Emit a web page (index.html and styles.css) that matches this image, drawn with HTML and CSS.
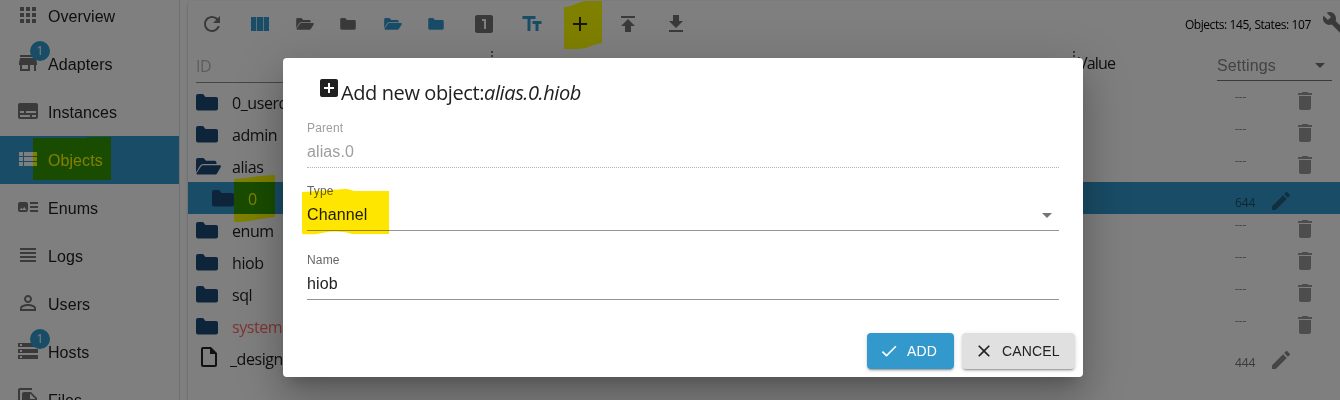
FILE: index.html
```html
<!DOCTYPE html>
<html lang="en">
<head>
<meta charset="utf-8">
<title>Objects</title>
<link rel="stylesheet" href="styles.css">
</head>
<body>
<svg class="defs" aria-hidden="true">
  <symbol id="folder" viewBox="0 0 22 17"><path d="M2 0H7L9.5 3H20a2 2 0 0 1 2 2V14.5a2 2 0 0 1-2 2H2a2 2 0 0 1-2-2V2A2 2 0 0 1 2 0Z"/></symbol>
  <symbol id="folder-open" viewBox="0 0 25 17"><path d="M2 0H7.5L10 2.7H18.5a2 2 0 0 1 2 2V6H7.3a4 4 0 0 0-3.4 2L0 14.500V2A2 2 0 0 1 2 0Z"/><path d="M7.300 7.200H24a1 1 0 0 1 .9 1.500L21 15.400a2 2 0 0 1-1.800 1.100H1.500a1 1 0 0 1-.8-1.500L5 8.400a2.700 2.700 0 0 1 2.300-1.200Z"/></symbol>
  <symbol id="trash" viewBox="0 0 24 24"><path d="M6 19c0 1.100.9 2 2 2h8c1.100 0 2-.9 2-2V7H6v12zM19 4h-3.500l-1-1h-5l-1 1H5v2h14V4z"/></symbol>
  <symbol id="pencil" viewBox="0 0 24 24"><path d="M3 17.250V21h3.750L17.810 9.940l-3.750-3.750L3 17.250zM20.710 7.040c.39-.39.39-1.020 0-1.410l-2.340-2.340c-.39-.39-1.020-.39-1.410 0l-1.830 1.830 3.750 3.750 1.830-1.830z"/></symbol>
</svg>
<div class="app">
  <nav class="sidebar">
    <a class="nav-item"><svg viewBox="0 0 24 24"><path d="M4 8h4V4H4v4zm6 12h4v-4h-4v4zm-6 0h4v-4H4v4zm0-6h4v-4H4v4zm6 0h4v-4h-4v4zm6-10v4h4V4h-4zm-6 4h4V4h-4v4zm6 6h4v-4h-4v4zm0 6h4v-4h-4v4z"/></svg><span>Overview</span></a>
    <a class="nav-item"><svg viewBox="0 0 24 24"><path d="M20 4H4v2h16V4zm1 10v-2l-1-5H4l-1 5v2h1v6h10v-6h4v6h2v-6h1zm-9 4H6v-4h6v4z"/></svg><span>Adapters</span><b class="badge">1</b></a>
    <a class="nav-item"><svg viewBox="0 0 24 24"><path d="M20 4H4c-1.100 0-2 .9-2 2v12c0 1.100.9 2 2 2h16c1.100 0 2-.9 2-2V6c0-1.100-.9-2-2-2zM4 12h4v2H4v-2zm10 6H4v-2h10v2zm6 0h-4v-2h4v2zm0-4H10v-2h10v2z"/></svg><span>Instances</span></a>
    <a class="nav-item active"><svg viewBox="0 0 24 24"><path d="M3 9h4V5H3v4zm0 5h4v-4H3v4zm5 0h13v-4H8v4zm0-9v4h13V5H8zM3 19h4v-4H3v4zm5 0h13v-4H8v4z"/></svg><span>Objects</span></a>
    <a class="nav-item"><svg viewBox="0 0 24 24"><path d="M22 13h-8v-2h8v2zm0-6h-8v2h8V7zm-8 10h8v-2h-8v2zm-2-8v6c0 1.100-.9 2-2 2H4c-1.100 0-2-.9-2-2V9c0-1.100.9-2 2-2h6c1.100 0 2 .9 2 2zm-1.500 6-2.250-3-1.750 2.260-1.250-1.510L3.500 15h7z"/></svg><span>Enums</span></a>
    <a class="nav-item"><svg viewBox="0 0 24 24"><path d="M4 15h16v-2H4v2zm0 4h16v-2H4v2zm0-8h16V9H4v2zm0-6v2h16V5H4z"/></svg><span>Logs</span></a>
    <a class="nav-item"><svg viewBox="0 0 24 24"><path d="M12 5.900a2.100 2.100 0 1 1 0 4.200 2.100 2.100 0 0 1 0-4.200m0 9c2.970 0 6.100 1.460 6.100 2.100v1.100H5.900V17c0-.64 3.130-2.100 6.100-2.100M12 4C9.790 4 8 5.790 8 8s1.790 4 4 4 4-1.790 4-4-1.790-4-4-4zm0 9c-2.670 0-8 1.340-8 4v3h16v-3c0-2.660-5.330-4-8-4z"/></svg><span>Users</span></a>
    <a class="nav-item"><svg viewBox="0 0 24 24"><path d="M2 20h20v-4H2v4zm2-3h2v2H4v-2zM2 4v4h20V4H2zm4 3H4V5h2v2zm-4 7h20v-4H2v4zm2-3h2v2H4v-2z"/></svg><span>Hosts</span><b class="badge">1</b></a>
    <a class="nav-item"><svg viewBox="0 0 24 24"><path d="M16 1H4C2.900 1 2 1.900 2 3v14h2V3h12V1zm-1 4 6 6v10c0 1.100-.9 2-2 2H7.990C6.890 23 6 22.100 6 21l.01-14c0-1.100.89-2 1.990-2h7zm-1 7h5.500L14 6.500V12z"/></svg><span>Files</span></a>
  </nav>

  <main class="panel">
    <div class="toolbar">
      <button><svg viewBox="0 0 24 24"><path d="M17.650 6.350C16.200 4.900 14.210 4 12 4c-4.420 0-7.990 3.580-7.990 8s3.570 8 7.990 8c3.730 0 6.840-2.550 7.730-6h-2.080c-.82 2.330-3.040 4-5.650 4-3.310 0-6-2.690-6-6s2.690-6 6-6c1.660 0 3.140.69 4.220 1.780L13 11h7V4l-2.350 2.350z"/></svg></button>
      <button class="on"><svg viewBox="0 0 24 24"><path d="M3 5h5.300v14H3zM9 5h6v14H9zM15.700 5H21v14h-5.300z"/></svg></button>
      <div class="folders">
        <button><svg class="fo"><use href="#folder-open"/></svg></button>
        <button><svg class="fc"><use href="#folder"/></svg></button>
        <button class="on"><svg class="fo"><use href="#folder-open"/></svg></button>
        <button class="on"><svg class="fc"><use href="#folder"/></svg></button>
      </div>
      <button><svg viewBox="0 0 24 24"><path d="M19 3H5c-1.100 0-2 .9-2 2v14c0 1.100.9 2 2 2h14c1.100 0 2-.9 2-2V5c0-1.100-.9-2-2-2zm-5 14h-2V9h-2V7h4v10z"/></svg></button>
      <button class="on"><svg viewBox="0 0 24 24"><path d="M2.500 4v3h5v12h3V7h5V4h-13zm19 5h-9v3h3v7h3v-7h3V9z"/></svg></button>
      <button class="dark"><svg viewBox="0 0 24 24"><path d="M19 13h-6v6h-2v-6H5v-2h6V5h2v6h6v2z"/></svg></button>
      <button><svg viewBox="0 0 24 24"><path d="M5 4v2h14V4H5zm0 10h4v6h6v-6h4l-7-7-7 7z"/></svg></button>
      <button><svg viewBox="0 0 24 24"><path d="M19 9h-4V3H9v6H5l7 7 7-7zM5 18v2h14v-2H5z"/></svg></button>
      <span class="stats">Objects: 145, States: 107</span>
      <svg class="wrench" viewBox="0 0 24 24"><path d="m22.700 19-9.100-9.100c.9-2.300.4-5-1.500-6.900-2-2-5-2.400-7.400-1.300L9 6 6 9 1.600 4.700C.4 7.100.9 10.100 2.900 12.100c1.900 1.900 4.600 2.400 6.900 1.500l9.100 9.100c.4.4 1 .4 1.400 0l2.300-2.300c.5-.4.5-1.100.1-1.400z"/></svg>
    </div>
    <div class="head">
      <div class="id-field">ID</div>
      <i class="grip"></i>
      <i class="grip"></i>
      <span class="value">Value</span>
      <div class="settings">Settings<i class="caret"></i></div>
    </div>
    <div class="rows">
      <div class="row"><svg class="ico"><use href="#folder"/></svg><span>0_userdata</span><em>---</em><svg class="act"><use href="#trash"/></svg></div>
      <div class="row"><svg class="ico"><use href="#folder"/></svg><span>admin</span><em>---</em><svg class="act"><use href="#trash"/></svg></div>
      <div class="row"><svg class="ico open"><use href="#folder-open"/></svg><span>alias</span><em>---</em><svg class="act"><use href="#trash"/></svg></div>
      <div class="row selected"><svg class="ico"><use href="#folder"/></svg><span>0</span><em class="num">644</em><svg class="act edit"><use href="#pencil"/></svg></div>
      <div class="row"><svg class="ico"><use href="#folder"/></svg><span>enum</span><em>---</em><svg class="act"><use href="#trash"/></svg></div>
      <div class="row"><svg class="ico"><use href="#folder"/></svg><span>hiob</span><em>---</em><svg class="act"><use href="#trash"/></svg></div>
      <div class="row"><svg class="ico"><use href="#folder"/></svg><span>sql</span><em>---</em><svg class="act"><use href="#trash"/></svg></div>
      <div class="row system"><svg class="ico"><use href="#folder"/></svg><span>system</span><em>---</em><svg class="act"><use href="#trash"/></svg></div>
      <div class="row doc"><svg class="file" viewBox="0 0 24 24"><path d="M14 2H6c-1.100 0-2 .9-2 2v16c0 1.100.9 2 2 2h12c1.100 0 2-.9 2-2V8l-6-6zM6 20V4h7v5h5v11H6z"/></svg><span>_design</span><em class="num">444</em><svg class="act edit"><use href="#pencil"/></svg></div>
    </div>
  </main>
  <svg class="marker" viewBox="0 0 1340 400"><path d="M33 138H87V137H111V180H33ZM564 7C573 7 579 1 587 1H602V43C590 45 588 49 576 49H564ZM234 179C247 178 254 176 275 175V217C262 218 252 222 234 222Z"/></svg>
</div>

<div class="backdrop">
  <section class="dialog">
    <h2><svg viewBox="0 0 24 24"><path d="M19 3H5c-1.100 0-2 .9-2 2v14c0 1.100.9 2 2 2h14c1.100 0 2-.9 2-2V5c0-1.100-.9-2-2-2zm-2 10h-4v4h-2v-4H7v-2h4V7h2v4h4v2z"/></svg><span>Add new object:</span><i>alias.0.hiob</i></h2>
    <div class="field disabled"><label>Parent</label><p>alias.0</p></div>
    <div class="field type"><label>Type</label><p>Channel<i class="caret"></i></p></div>
    <div class="field name"><label>Name</label><p>hiob</p></div>
    <footer>
      <button class="btn primary"><svg viewBox="0 0 24 24"><path d="M9 16.170 4.830 12l-1.420 1.410L9 19 21 7l-1.410-1.410z"/></svg><span>ADD</span></button>
      <button class="btn"><svg viewBox="0 0 24 24"><path d="M19 6.410 17.590 5 12 10.590 6.410 5 5 6.410 10.590 12 5 17.590 6.410 19 12 13.410 17.590 19 19 17.590 13.410 12z"/></svg><span>CANCEL</span></button>
    </footer>
    <svg class="dialog-marker" viewBox="0 0 87 46"><path d="M0 3C16 2 25 1 42 0C50 0 48 2 55 2H87V45H50C40 42 30 42 20 44C12 46 6 45 0 45Z"/></svg>
  </section>
</div>
</body>
</html>
```
FILE: styles.css
```css
* { box-sizing: border-box; }
html, body { margin: 0; height: 400px; overflow: hidden; }
body { position: relative; font: 16px/20px "Liberation Sans", Arial, sans-serif; color: #212121; background: #fff; }
svg { display: block; fill: currentColor; flex: none; }
button { font: inherit; border: 0; padding: 0; background: none; }
.defs { position: absolute; width: 0; height: 0; }

.app { position: relative; display: flex; width: 1340px; height: 400px; overflow: hidden; isolation: isolate; background: #fff; }
.sidebar { width: 180px; flex: none; margin-top: -8px; border-right: 1px solid #e0e0e0; height: 440px; }
.nav-item { position: relative; display: flex; align-items: center; height: 48px; padding-left: 16px; gap: 8px; letter-spacing: .07px; }
.nav-item span { margin-top: 2px; }
.nav-item svg { width: 24px; height: 24px; color: #757575; margin-top: -2px; }
.nav-item.active { background: #3399cc; color: #fff; }
.nav-item.active svg { color: #fff; }
.badge { position: absolute; left: 30px; top: 1px; width: 20px; height: 20px; border-radius: 50%; background: #3399cc; color: #fff; font: 12px/20px "Open Sans", sans-serif; text-align: center; }

.panel { flex: none; width: 1160px; height: 420px; margin: 1px 0 0 8px; border-radius: 4px; box-shadow: 0 1px 3px rgba(0,0,0,.25), 0 1px 1px rgba(0,0,0,.14); font-family: "Open Sans", sans-serif; letter-spacing: -.35px; }
.toolbar { display: flex; align-items: center; height: 46px; color: #757575; }
.toolbar button { display: flex; align-items: center; justify-content: center; width: 48px; height: 46px; color: inherit; }
.toolbar button svg { width: 24px; height: 24px; }
.toolbar .on { color: #3399cc; }
.toolbar .dark { color: #333; }
.folders { display: flex; width: 176px; margin: 0 1px 0 -1px; }
.folders button { width: 44px; }
.toolbar button .fo { width: 18px; height: 12px; }
.toolbar button .fc { width: 16px; height: 12px; margin-left: -2px; }
.stats { flex: none; margin: 1px 0 0 485px; width: 128px; font-size: 12px; letter-spacing: -.46px; word-spacing: .3px; color: #000; white-space: nowrap; }
.wrench { width: 24px; height: 24px; margin: -2px 0 0 9px; }

.head { display: flex; height: 39px; padding-left: 8px; }
.id-field { width: 296px; height: 36px; padding-top: 9px; color: #bbb; border-bottom: 1px solid #8c8c8c; font-weight: 400; }
.grip { width: 2px; height: 30px; margin-top: 4px; margin-left: -1px; background: repeating-linear-gradient(#777 0 2px, transparent 2px 4px); }
.grip + .grip { margin-left: 580px; }
.value { width: 132px; margin-left: 3px; padding-top: 6px; letter-spacing: -.8px; }
.settings { display: flex; align-items: center; width: 115px; height: 34px; margin-left: 7px; padding-top: 4px; font: 16px/20px "Liberation Sans", sans-serif; letter-spacing: .15px; color: #868686; border-bottom: 1px solid #777; }
.caret { width: 0; height: 0; border: 5px solid transparent; border-top-color: #757575; border-bottom: 0; margin-left: auto; margin-right: 7px; }

.row { display: flex; align-items: center; height: 32px; padding-left: 8px; }
.row .ico { width: 22px; height: 17px; margin-right: 14px; color: #1a4877; }
.row .ico.open { width: 25px; margin-right: 11px; }
.row span { width: 300px; margin-top: 2px; letter-spacing: -.42px; }
.row em { width: 58px; margin: -10px 0 0 703px; font-style: normal; font-size: 12px; letter-spacing: -.1px; color: #888; }
.row em.num { margin-top: 9px; width: 34px; letter-spacing: -.1px; color: #757575; }
.act { width: 24px; height: 24px; color: #9a9a9a; margin-top: -2px; }
.act.edit { color: #8b8b8b; margin: 6px 0 0; }
.doc .act.edit { margin-top: 4px; }
.selected { background: #3399cc; padding-left: 24px; }
.selected span { width: 284px; color: #fff; }
.selected em.num { color: #1d4d66; }
.selected .act.edit { color: #22607f; }
.system span { color: #ff6a6a; }
.doc .file { width: 24px; height: 24px; margin: -2px 12px 0 1px; color: #222; }
.doc span { width: 299px; margin-left: -3px; margin-right: 3px; }
.marker { position: absolute; inset: 0; width: 1340px; height: 400px; fill: #ff0; mix-blend-mode: multiply; }

.backdrop { position: absolute; inset: 0; padding: 58px 0 0 283px; background: rgba(0,0,0,.5); }
.dialog { position: relative; isolation: isolate; width: 800px; height: 319px; padding: 16px 24px; background: #fff; border-radius: 4px; box-shadow: 0 11px 15px -7px rgba(0,0,0,.2), 0 24px 38px 3px rgba(0,0,0,.14), 0 9px 46px 8px rgba(0,0,0,.12); }
.dialog h2 { display: flex; align-items: center; height: 38px; margin: 0 0 8px 10px; font: 20px/32px "Open Sans", sans-serif; letter-spacing: -.4px; }
.dialog h2 svg { width: 24px; height: 24px; margin-top: -10px; }
.dialog h2 i { letter-spacing: -.4px; }
.field { height: 48px; border-bottom: 1px solid #949494; }
.field label { display: block; height: 16px; font-size: 12px; line-height: 16px; letter-spacing: .15px; color: #666; }
.field p { display: flex; align-items: center; height: 20px; margin: 6px 0 0; letter-spacing: .1px; }
.field.disabled { border-bottom: 1px dotted #b5b5b5; }
.disabled label, .disabled p { color: #9e9e9e; }
.type { margin-top: 15px; }
.name { margin-top: 21px; }
footer { display: flex; justify-content: flex-end; gap: 8px; margin: 33px -16px 0 0; }
.btn { display: flex; align-items: center; height: 36px; width: 113px; padding-left: 12px; gap: 8px; border-radius: 4px; background: #e0e0e0; color: #212121; font-size: 14px; letter-spacing: .15px; box-shadow: 0 3px 1px -2px rgba(0,0,0,.2), 0 2px 2px rgba(0,0,0,.14), 0 1px 5px rgba(0,0,0,.12); }
.btn.primary { width: 87px; background: #3399cc; color: #fff; }
.btn svg { width: 20px; height: 20px; }
.dialog-marker { position: absolute; left: 19px; top: 131px; width: 87px; height: 46px; fill: #ffe600; mix-blend-mode: multiply; }
```
